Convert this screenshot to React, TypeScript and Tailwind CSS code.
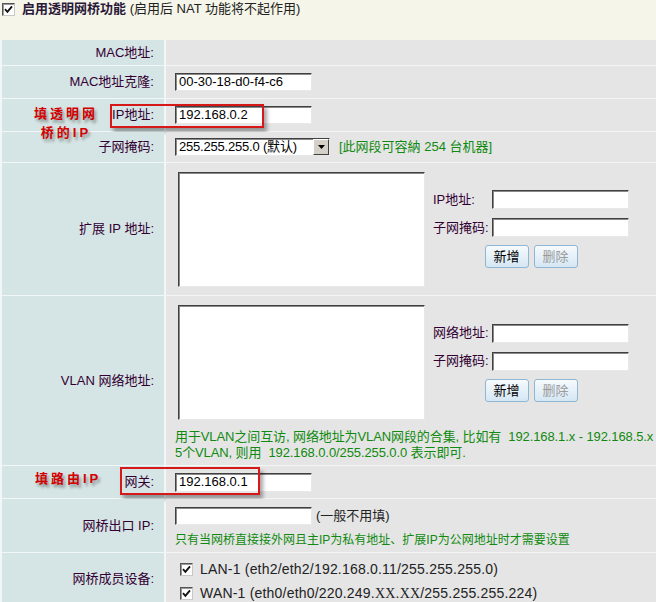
import React from "react";

const labelColor = "text-[#330033]";

function Check() {
  return (
    <span className="inline-flex h-[13px] w-[13px] shrink-0 items-center justify-center border border-t-[#555] border-l-[#555] border-b-[#c8c8c8] border-r-[#c8c8c8] bg-white shadow-[inset_1px_1px_0_#999]">
      <svg width="9" height="9" viewBox="0 0 9 9">
        <path d="M1 4.2 L3.4 6.8 L8 1.4" fill="none" stroke="#111" strokeWidth="1.9" />
      </svg>
    </span>
  );
}

function TextBox({ value = "", className = "" }: { value?: string; className?: string }) {
  return (
    <div
      className={`flex items-center overflow-hidden whitespace-nowrap border border-t-[#404040] border-l-[#404040] border-b-[#e8e8e8] border-r-[#e8e8e8] bg-white pl-[3px] text-[13px] text-black shadow-[inset_1px_1px_0_#8a8a8a] ${className}`}
    >
      {value}
    </div>
  );
}

function Btn({ children, disabled }: { children: React.ReactNode; disabled?: boolean }) {
  return (
    <button
      className={`h-[23px] w-[44px] rounded-[3px] border border-[#8fb6d2] bg-linear-to-b from-[#f6fafd] to-[#d5e7f4] text-[13px] leading-none ${
        disabled ? "text-[#9a9a9a]" : "text-black"
      }`}
    >
      {children}
    </button>
  );
}

function SideForm({ first }: { first: string }) {
  return (
    <div className="flex w-[196px] flex-col">
      <div className="flex h-[19px] items-center">
        <span className={`w-[59px] text-[13px] ${labelColor}`}>{first}</span>
        <TextBox className="h-[19px] w-[137px]" />
      </div>
      <div className="mt-[9px] flex h-[19px] items-center">
        <span className={`w-[59px] text-[13px] ${labelColor}`}>子网掩码:</span>
        <TextBox className="h-[19px] w-[137px]" />
      </div>
      <div className="mt-[8px] flex justify-center gap-[5px]">
        <Btn>新增</Btn>
        <Btn disabled>删除</Btn>
      </div>
    </div>
  );
}

function Row({
  label,
  h,
  children,
  valueClass = "flex items-center",
  overlay,
}: {
  label: string;
  h: string;
  children?: React.ReactNode;
  valueClass?: string;
  overlay?: React.ReactNode;
}) {
  return (
    <div className={`relative grid grid-cols-[162px_1fr] gap-x-[2px] ${h}`}>
      <div className={`flex items-center justify-end bg-[#d5e4e4] pr-[10px] text-[13px] ${labelColor}`}>{label}</div>
      <div className={`overflow-hidden bg-[#e5e5e5] pl-[9px] ${valueClass}`}>{children}</div>
      {overlay}
    </div>
  );
}

const note =
  "font-bold text-[13px] text-[#d40000] tracking-[3px] [text-shadow:2px_3px_3px_rgba(0,0,0,0.35)]";
const redBox = "absolute border-2 border-[#d61818] shadow-[3px_4px_4px_rgba(0,0,0,0.35)]";

export default function App() {
  return (
    <div className="h-[602px] w-[656px] overflow-hidden bg-white font-['Liberation_Sans','Noto_Sans_CJK_SC',sans-serif] text-[13px] leading-[16px]">
      {/* header */}
      <div className="flex h-[40px] items-start gap-[7px] bg-[#f5f5e9] pl-[2px] pt-[3px]">
        <Check />
        <div className="-mt-[2px] whitespace-nowrap">
          <span className="font-bold text-[#2a1838]">启用透明网桥功能</span>
          <span className="text-[#222]"> (启用后 NAT 功能将不起作用)</span>
        </div>
      </div>

      <div className="flex flex-col gap-[1px] bg-[#f3f6f6] pl-[2px]">
        <Row label="MAC地址:" h="h-[25px]" />
        <Row label="MAC地址克隆:" h="h-[32px]">
          <TextBox value="00-30-18-d0-f4-c6" className="h-[18px] w-[137px]" />
        </Row>
        <Row
          label="IP地址:"
          h="h-[32px]"
          overlay={
            <>
              <div className={`${redBox} left-[108px] top-[5px] h-[24px] w-[154px]`} />
              <div className={`absolute left-[22px] top-[5px] z-10 w-[84px] text-center leading-[19px] ${note}`}>
                填透明网
                <br />
                桥的IP
              </div>
            </>
          }
        >
          <TextBox value="192.168.0.2" className="h-[18px] w-[137px]" />
        </Row>
        <Row label="子网掩码:" h="h-[30px]">
          <div className="flex h-[18px] w-[155px] items-center justify-between border border-t-[#404040] border-l-[#404040] border-b-[#e8e8e8] border-r-[#e8e8e8] bg-white pl-[3px] text-black shadow-[inset_1px_1px_0_#8a8a8a]">
            <span className="whitespace-nowrap tracking-[-0.2px]">255.255.255.0 (默认)</span>
            <span className="flex h-[16px] w-[16px] items-center justify-center border border-t-white border-l-white border-b-[#404040] border-r-[#404040] bg-[#d4d0c8]">
              <svg width="7" height="4" viewBox="0 0 7 4">
                <path d="M0 0 H7 L3.5 4 Z" fill="#000" />
              </svg>
            </span>
          </div>
          <span className="ml-[9px] whitespace-nowrap text-[#108a10]">[此网段可容納 254 台机器]</span>
        </Row>
        <Row label="扩展 IP 地址:" h="h-[132px]">
          <div className="ml-[3px] flex items-center gap-[8px]">
            <TextBox className="h-[115px] w-[247px]" />
            <SideForm first="IP地址:" />
          </div>
        </Row>
        <Row label="VLAN 网络地址:" h="h-[169px]" valueClass="flex flex-col pt-[9px]">
          <div className="ml-[3px] flex items-center gap-[8px]">
            <TextBox className="h-[115px] w-[247px]" />
            <SideForm first="网络地址:" />
          </div>
          <div className="mt-[9px] whitespace-nowrap tracking-[-0.1px] text-[#108a10]">
            用于VLAN之间互访, 网络地址为VLAN网段的合集, 比如有&nbsp; 192.168.1.x - 192.168.5.x
            <br />
            5个VLAN, 则用&nbsp; 192.168.0.0/255.255.0.0 表示即可.
          </div>
        </Row>
        <Row
          label="网关:"
          h="h-[32px]"
          overlay={
            <>
              <div className={`${redBox} left-[118px] top-[1px] h-[28px] w-[140px]`} />
              <div className={`absolute left-[33px] top-[5px] z-10 whitespace-nowrap ${note}`}>填路由IP</div>
            </>
          }
        >
          <TextBox value="192.168.0.1" className="h-[19px] w-[137px]" />
        </Row>
        <Row label="网桥出口 IP:" h="h-[53px]" valueClass="flex flex-col pt-[8px]">
          <div className="flex items-center gap-[4px]">
            <TextBox className="h-[18px] w-[137px]" />
            <span className="text-[#222]">(一般不用填)</span>
          </div>
          <div className="mt-[7px] whitespace-nowrap text-[12px] text-[#108a10]">
            只有当网桥直接接外网且主IP为私有地址、扩展IP为公网地址时才需要设置
          </div>
        </Row>
        <Row label="网桥成员设备:" h="h-[52px]" valueClass="flex flex-col pt-[4px] pl-[14px]">
          <div className="flex h-[24px] items-center gap-[7px] whitespace-nowrap text-[14px] tracking-[0.2px] text-[#222]">
            <Check />
            LAN-1 (eth2/eth2/192.168.0.11/255.255.255.0)
          </div>
          <div className="flex h-[24px] items-center gap-[7px] whitespace-nowrap text-[14px] tracking-[0.2px] text-[#222]">
            <Check />
            <span>
              WAN-1 (eth0/eth0/220.249.<span className="font-['Liberation_Serif',serif]">XX</span>.
              <span className="font-['Liberation_Serif',serif]">XX</span>/255.255.255.224)
            </span>
          </div>
        </Row>
      </div>
    </div>
  );
}
